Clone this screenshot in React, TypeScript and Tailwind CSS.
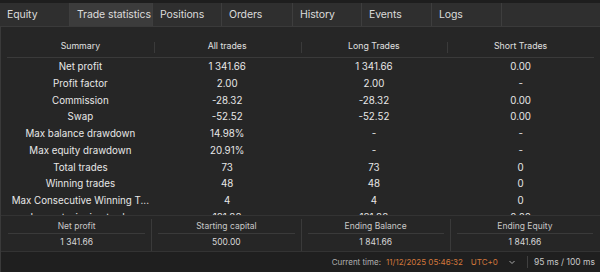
import React from "react";

const tabs = ["Equity", "Trade statistics", "Positions", "Orders", "History", "Events", "Logs"];
const tabWidths = ["w-[70px]", "w-[83px]", "w-[69px]", "w-[71px]", "w-[69px]", "w-[70px]", "w-[70px]"];

const rows: string[][] = [
  ["Net profit", "1 341.66", "1 341.66", "0.00"],
  ["Profit factor", "2.00", "2.00", "-"],
  ["Commission", "-28.32", "-28.32", "0.00"],
  ["Swap", "-52.52", "-52.52", "0.00"],
  ["Max balance drawdown", "14.98%", "-", "-"],
  ["Max equity drawdown", "20.91%", "-", "-"],
  ["Total trades", "73", "73", "0"],
  ["Winning trades", "48", "48", "0"],
  ["Max Consecutive Winning T...", "4", "4", "0"],
  ["Largest winning trade", "181.88", "181.88", "0.00"],
];

const totals = [
  ["Net profit", "1 341.66"],
  ["Starting capital", "500.00"],
  ["Ending Balance", "1 841.66"],
  ["Ending Equity", "1 841.66"],
];

export default function App() {
  return (
    <div
      className="w-[600px] h-[272px] bg-[#1e1e1e] flex flex-col overflow-hidden text-[9.75px] text-[#e8e8e8]"
      style={{ fontFamily: "Inter, 'Noto Sans', sans-serif" }}
    >
      {/* tabs */}
      <div className="mt-[3px] h-[24px] flex bg-[#2f2f2f] border-b border-[#3a3a3a] text-[10.5px] text-[#dcdcdc] tracking-[-0.1px]">
        {tabs.map((t, i) => (
          <div
            key={t}
            className={`${tabWidths[i]} h-full flex items-center pl-[7px] border-r border-[#3e3e3e] whitespace-nowrap ${
              i === 1 ? "bg-[#3c3c3c]" : ""
            }`}
          >
            {t}
          </div>
        ))}
      </div>

      {/* content */}
      <div className="flex-1 flex flex-col bg-[#262626] border-l border-[#3a3a3a]">
        <div className="h-[189px] overflow-hidden px-[6px] pt-[10px] border-b border-[#333]">
          <div className="grid grid-cols-4 h-[21px] border-b border-[#3a3a3a] text-[8.75px] text-[#e0e0e0]">
            {["Summary", "All trades", "Long Trades", "Short Trades"].map((h, i) => (
              <div key={h} className="relative flex items-center justify-center">
                {i > 0 && <div className="absolute left-0 top-[5px] h-[11px] border-l border-[#3a3a3a]" />}
                {h}
              </div>
            ))}
          </div>
          <div className="pt-[1px]">
            {rows.map((r) => (
              <div key={r[0]} className="grid grid-cols-4 h-[16.75px]">
                {r.map((c, j) => (
                  <div key={j} className="flex items-center justify-center whitespace-nowrap">
                    {c}
                  </div>
                ))}
              </div>
            ))}
          </div>
        </div>

        <div className="h-[36px] grid grid-cols-4 px-[1px] pt-[3px] border-b border-[#333]">
          {totals.map(([label, value], i) => (
            <div
              key={label}
              className={`flex flex-col px-[6px] ${i > 0 ? "border-l border-[#3a3a3a]" : ""}`}
            >
              <div className="h-[15px] flex items-center justify-center text-[8.5px] text-[#c8c8c8] border-b border-[#3a3a3a]">
                {label}
              </div>
              <div className="h-[16px] flex items-center justify-center text-[8.5px] text-[#d8d8d8]">
                {value}
              </div>
            </div>
          ))}
        </div>

        {/* status bar */}
        <div className="flex-1 bg-[#1f1f1f] flex items-center justify-end pr-[5px] text-[8px] text-[#b0b0b0]">
          <span>Current time:</span>
          <span className="ml-[5px] text-[#d2773b]">11/12/2025 05:46:32</span>
          <span className="ml-[8px] text-[#d2773b]">UTC+0</span>
          <svg className="ml-[10px]" width="8" height="8" viewBox="0 0 8 8" fill="none">
            <path d="M1.5 3l2.5 2.5L6.5 3" stroke="#a8a8a8" strokeWidth="1" />
          </svg>
          <div className="ml-[11px] h-[12px] border-l border-[#404040]" />
          <span className="ml-[6px] text-[8.5px] text-[#c8c8c8]">95 ms / 100 ms</span>
        </div>
      </div>
    </div>
  );
}
